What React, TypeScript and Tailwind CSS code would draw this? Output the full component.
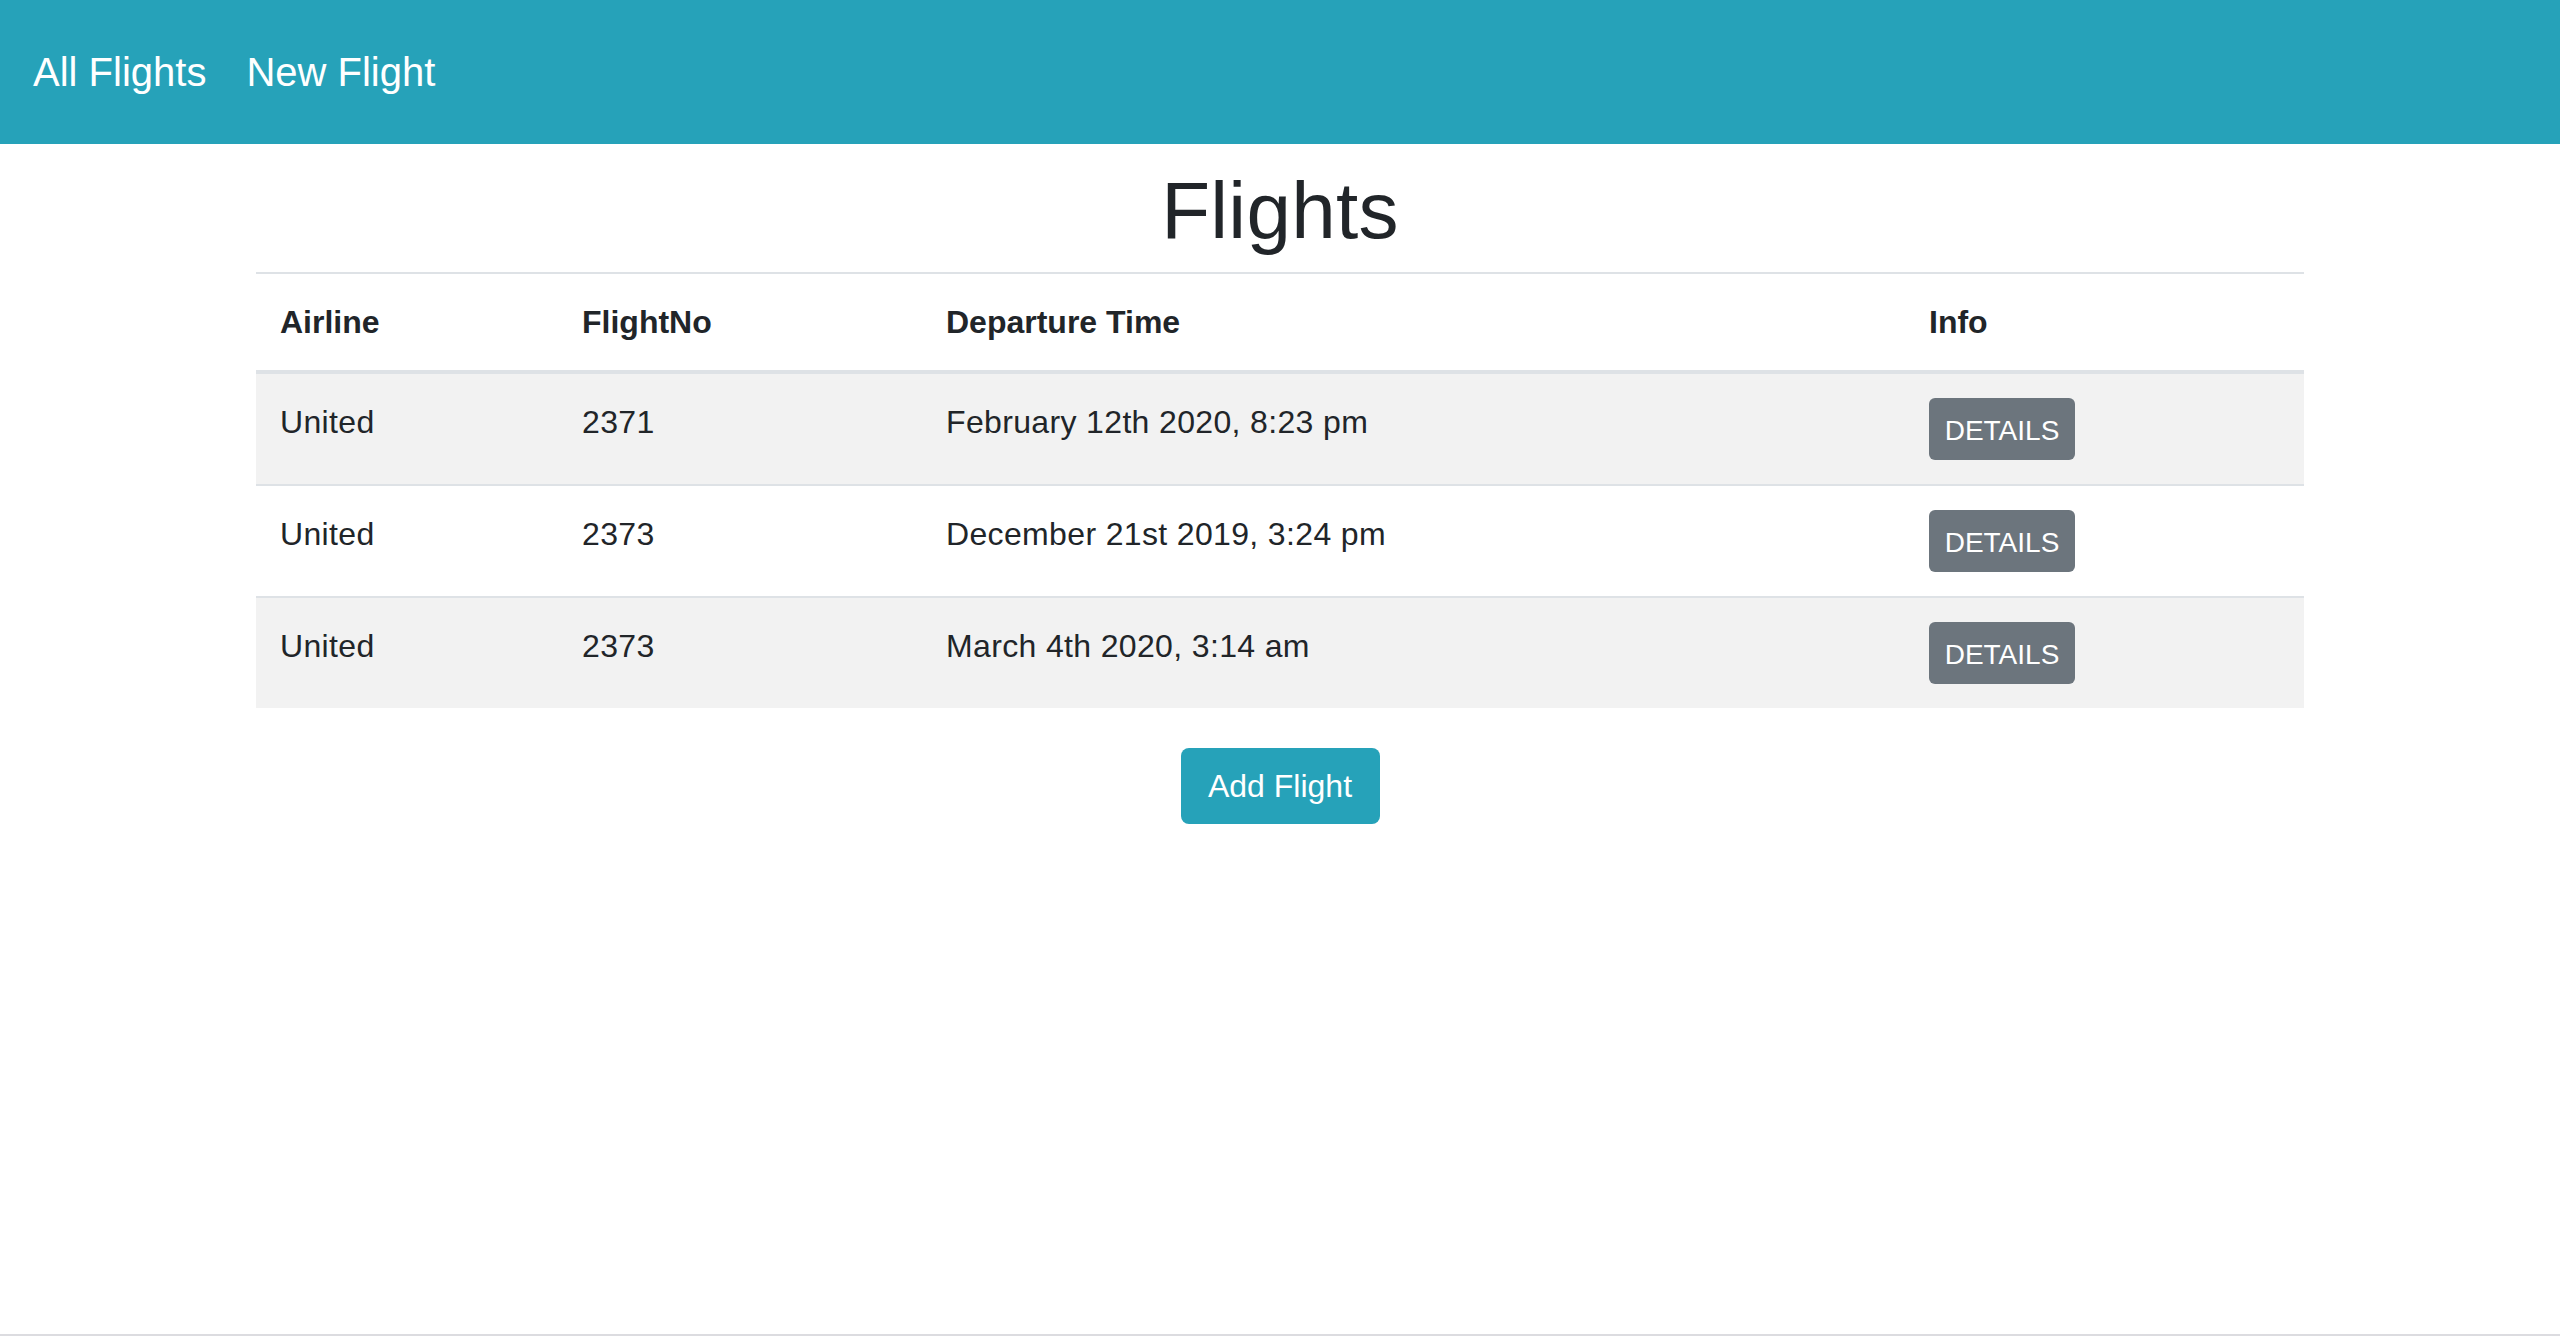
const flights = [
  { airline: "United", no: "2371", time: "February 12th 2020, 8:23 pm" },
  { airline: "United", no: "2373", time: "December 21st 2019, 3:24 pm" },
  { airline: "United", no: "2373", time: "March 4th 2020, 3:14 am" },
];

export default function App() {
  return (
    <div className="flex h-[1340px] flex-col bg-white font-['Liberation_Sans',Arial,sans-serif] text-[#212529]">
      {/* Navbar */}
      <nav className="flex h-[144px] shrink-0 items-center gap-[40px] bg-[#26a2b9] pl-[33px] text-[40px] leading-[48px] text-white">
        <a>All Flights</a>
        <a>New Flight</a>
      </nav>

      <main className="flex-1">
        <h1 className="mt-[16px] mb-[16px] h-[96px] pt-[6px] text-center text-[80px] leading-[90px] font-normal tracking-[0.3px]">
          Flights
        </h1>

        <div className="mx-auto w-[2048px] border-t-2 border-[#dee2e6]">
          {/* Header */}
          <div className="flex border-b-4 border-[#dee2e6] text-[32px] leading-[48px] font-bold">
            <div className="w-[302px] p-[24px]">Airline</div>
            <div className="w-[364px] p-[24px]">FlightNo</div>
            <div className="w-[983px] p-[24px]">Departure Time</div>
            <div className="flex-1 p-[24px]">Info</div>
          </div>

          {/* Rows */}
          {flights.map((f, i) => (
            <div
              key={i}
              className={`flex text-[32px] leading-[48px] tracking-[0.35px] ${i > 0 ? "border-t-2 border-[#dee2e6]" : ""} ${i % 2 === 0 ? "bg-[#f2f2f2]" : "bg-white"}`}
            >
              <div className="w-[302px] px-[24px] pt-[24px]">{f.airline}</div>
              <div className="w-[364px] px-[24px] pt-[24px]">{f.no}</div>
              <div className="w-[983px] px-[24px] pt-[24px]">{f.time}</div>
              <div className="flex-1 p-[24px]">
                <button className="flex h-[62px] w-[146px] items-center justify-center rounded-[6px] bg-[#6c757d] pt-[3px] text-[28px] leading-[42px] tracking-normal text-white uppercase">
                  Details
                </button>
              </div>
            </div>
          ))}
        </div>

        <div className="mt-[40px] flex justify-center">
          <button className="flex h-[76px] w-[199px] items-center justify-center rounded-[8px] bg-[#26a2b9] text-[32px] leading-[48px] text-white">
            Add Flight
          </button>
        </div>
      </main>

      <div className="h-[2px] shrink-0 bg-[#dcdce0]" />
      <div className="h-[4px] shrink-0 bg-white" />
    </div>
  );
}
